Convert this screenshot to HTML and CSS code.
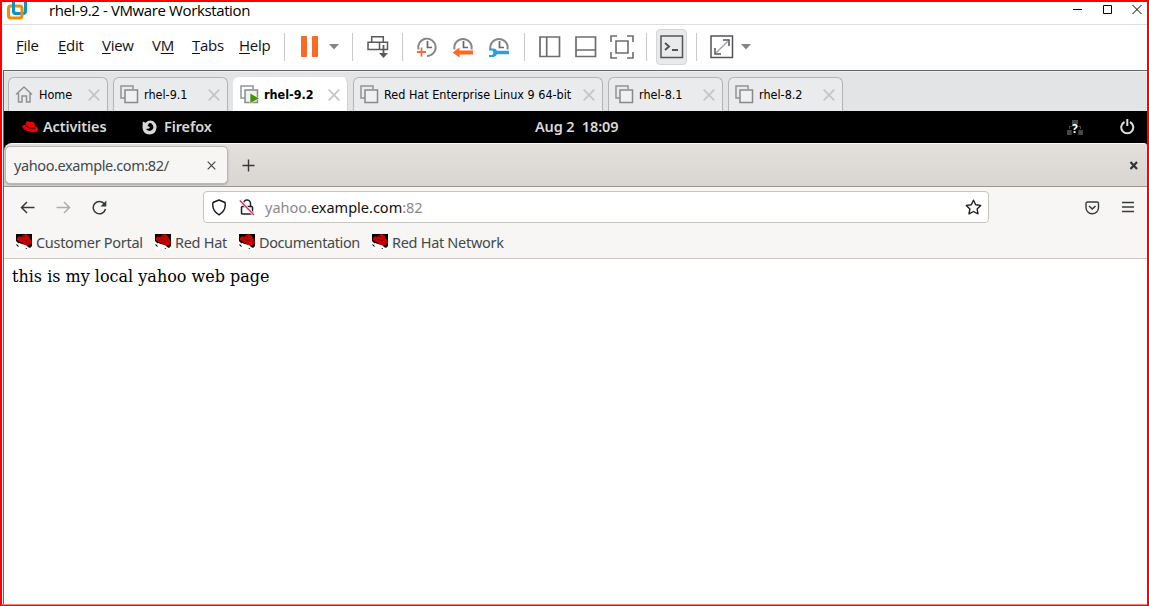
FILE: index.html
```html
<!DOCTYPE html>
<html lang="en">
<head>
<meta charset="utf-8">
<title>rhel-9.2 - VMware Workstation</title>
<link rel="stylesheet" href="styles.css">
</head>
<body>
<svg class="defs" width="0" height="0">
  <symbol id="vm" viewBox="0 0 19 19"><path d="M5 13H1V1h12v3" fill="none" stroke="#929497" stroke-width="1.5"/><rect x="5" y="5" width="12.5" height="12.5" fill="#f0f1f3" stroke="#88898c" stroke-width="1.5"/></symbol>
  <symbol id="close" viewBox="0 0 12 12"><path d="M.7.7l10.600 10.600M11.300.7L.7 11.300" fill="none" stroke="#c4c5c7" stroke-width="1.700"/></symbol>
  <symbol id="hat" viewBox="0 0 16 16"><path fill="#fff" d="M0 0h16v16H0z"/><path d="M0 0h16v12l-2 2-2-1-4-1-4-2-2-1-2-2z"/><path d="M1 4l2-2 2 1 2-2 3-1 3 2 1 3 1 1 1 3-3 2H9L4 8 1 6z" fill="#c80000"/><path d="M6 2l3 1M5 5l6 2" stroke="#7b0000"/><path d="M3 9l3 1 3 1 3 1-2 2-2-1-3-1-2-1z" fill="#fff"/><path d="M0 10l2 1 1 2-2-1zM6 12l2 1M9 14h2v1" fill="#000"/></symbol>
</svg>
<div class="window">
  <header class="titlebar">
    <svg class="logo" width="21" height="18" viewBox="0 0 21 18"><g fill="none" stroke-width="3"><rect x="6.500" y="-2.500" width="12" height="14" rx="2.500" stroke="#0793d0"/><path d="M15 6.500v7a2.500 2.500 0 0 1-2.500 2.500H4a2.500 2.500 0 0 1-2.500-2.500V6.500A2.500 2.500 0 0 1 4 4h8.500A2.500 2.500 0 0 1 15 6.500z" stroke="#f38b00"/><path d="M6.500 2v7a2.500 2.500 0 0 0 2.500 2.500h4" stroke="#0793d0"/></g></svg>
    <span class="title">rhel-9.2 - VMware Workstation</span>
    <svg class="controls" width="68" height="12" viewBox="0 0 68 12" fill="none" stroke="#000"><path d="M0 6.500h9M59.500 2l9 9M68.500 2l-9 9"/><path d="M30.500 2.500h8v8h-8z"/></svg>
  </header>
  <nav class="menubar">
    <span class="m-file"><u>F</u>ile</span><span class="m-edit"><u>E</u>dit</span><span class="m-view"><u>V</u>iew</span><span class="m-vm">V<u>M</u></span><span class="m-tabs"><u>T</u>abs</span><span class="m-help"><u>H</u>elp</span>
    <div class="tools group-power">
      <svg width="18" height="22"><path d="M.5.5h5v20h-5zM11.500.5h5v20h-5z" fill="#ff6a1f" stroke="#ed6c2f"/></svg>
      <svg class="drop" width="10" height="6"><path d="M0 0h10L5 5.500z" fill="#858585"/></svg>
    </div>
    <div class="tools group-keys"><svg width="22" height="24" viewBox="0 0 22 24" fill="none" stroke="#58595b" stroke-width="1.500"><path d="M4.700 1.700h11.600v5.600H4.700zM1 7.300h19.500V14.500H1zM12.500 7.300v7.200"/><path d="M16.500 10v11" stroke-width="1.800"/><path d="M12 18h9l-4.500 5z" fill="#58595b" stroke="none"/></svg></div>
    <div class="tools group-snap">
      <svg width="22" height="23" viewBox="0 0 22 23" fill="none"><path d="M2.500 13.500A8.700 8.700 0 1 1 11 20" stroke="#85868a" stroke-width="1.900"/><path d="M11.500 5v6.500H16" stroke="#66676a" stroke-width="1.700"/><path d="M1 16h9M5.500 11.500v9" stroke="#f36b37" stroke-width="1.800"/></svg>
      <svg width="22" height="23" viewBox="0 0 22 23" fill="none"><path d="M2.500 13.500A8.700 8.700 0 1 1 19.500 13.500" stroke="#85868a" stroke-width="1.900"/><path d="M11.500 5v6.500H16" stroke="#66676a" stroke-width="1.700"/><path d="M.5 16.500l7-5v3H21v4H7.500v3z" fill="#ff6a1f"/></svg>
      <svg width="22" height="23" viewBox="0 0 22 23" fill="none"><path d="M2.500 13.500A8.700 8.700 0 1 1 19.500 13.500" stroke="#85868a" stroke-width="1.900"/><path d="M11.500 5v6.500H16" stroke="#66676a" stroke-width="1.700"/><path d="M1 12.500h4.500q2.500 0 3.500 2.200h12v3.600H9q-1 2.700-3.500 2.700H1v-2h3l1.200-1.200v-2.600L4 14.500H1z" fill="#2c9fdc"/></svg>
    </div>
    <div class="tools group-view">
      <svg width="22" height="22" fill="none" stroke="#6c6d70" stroke-width="1.700"><path d="M1 1h19.500v19.500H1zM7.700 1v19.500"/></svg>
      <svg width="22" height="22" fill="none" stroke="#6c6d70" stroke-width="1.700"><path d="M1 1h19.500v19.500H1zM1 14h19.500"/></svg>
      <svg width="24" height="24" fill="none" stroke="#6c6d70" stroke-width="1.600"><path d="M1 7V1h6M17 1h6v6M23 17v6h-6M7 23H1v-6M6 6h12v12H6z"/></svg>
    </div>
    <div class="tools group-console"><span class="console"><svg width="24" height="24" fill="none" stroke="#535458" stroke-width="1.500"><path d="M1 1h21.500v21.500H1z"/><path d="M5 8l4 3.500L5 15M12 15h6" stroke-width="2"/></svg></span></div>
    <div class="tools group-fit"><svg width="24" height="24" fill="none" stroke="#535458" stroke-width="1.500"><path d="M1 1h21.500v21.500H1z"/><path d="M13 5h6v6M5 13v6h6" stroke-width="1.500"/><path d="M6 18L18 6" stroke="#a2a3a5" stroke-width="1.500"/></svg><svg class="drop" width="10" height="6"><path d="M0 0h10L5 5.500z" fill="#858585"/></svg></div>
  </nav>
  <main class="workspace">
    <div class="vmtabs">
      <div class="vmtab home"><svg class="vmicon" width="19" height="19" viewBox="0 0 19 19" fill="none" stroke="#909194" stroke-width="1.500"><path d="M1 9.500L9 2l8 7.500M3.500 8v9H7v-6h4.500v6h3.500V8"/></svg><span>Home</span><svg class="x"><use href="#close"/></svg></div>
      <div class="vmtab"><svg class="vmicon"><use href="#vm"/></svg><span>rhel-9.1</span><svg class="x"><use href="#close"/></svg></div>
      <div class="vmtab active"><svg class="vmicon" viewBox="0 0 19 19"><use href="#vm"/><path d="M10 8l9.500 5.500L10 18.500z" fill="#409407" stroke="#fff" stroke-width=".6"/></svg><span>rhel-9.2</span><svg class="x"><use href="#close"/></svg></div>
      <div class="vmtab wide"><svg class="vmicon"><use href="#vm"/></svg><span>Red Hat Enterprise Linux 9 64-bit</span><svg class="x"><use href="#close"/></svg></div>
      <div class="vmtab"><svg class="vmicon"><use href="#vm"/></svg><span>rhel-8.1</span><svg class="x"><use href="#close"/></svg></div>
      <div class="vmtab"><svg class="vmicon"><use href="#vm"/></svg><span>rhel-8.2</span><svg class="x"><use href="#close"/></svg></div>
    </div>
    <div class="gnome">
      <svg class="redhat" width="16" height="12" viewBox="0 0 16 12"><path d="M4 1q2-1.500 4 0 5-1 5 4 3 1 3 3 0 4-7 3Q1 9 .2 5.500 0 4 3.500 4z" fill="#e00"/><path d="M3.500 4.300q3 3.700 9.500 2.700" stroke="#320000" fill="none"/></svg>
      <span class="activities">Activities</span>
      <svg class="fox" width="15" height="15" viewBox="0 0 15 15"><path d="M.8 1.500L3.500 2.700Q7-.8 11 1q4 3 3.500 7-1 6.500-7 6.500T.5 8z" fill="#d8d8d8"/><path d="M7 3.200q2-.7 3 .8 2.500 3 .5 5.500-3 3-6.500-.5l3-.5 1-1.500-2.500-1z" fill="#000"/></svg>
      <span class="appname">Firefox</span>
      <span class="clock">Aug 2&nbsp; 18:09</span>
      <span class="net"><svg width="17" height="15" viewBox="0 0 17 15"><path d="M5 0h6v4H5zM0 10h5v5H0zM11 10h5v5h-5zM2 6h12v3h-1V7H3v2H2z" fill="#484848"/><path d="M4.500 4h7v11h-7z" fill="#000" opacity=".6"/></svg><span class="question">?</span></span>
      <svg class="power" width="15" height="16" viewBox="0 0 15 16" fill="none" stroke="#ddd" stroke-width="2"><path d="M4.500 3a6 6 0 1 0 5.500 0M7.300 0v7"/></svg>
    </div>
    <div class="browser">
      <div class="tabstrip">
        <div class="pagetab"><span>yahoo.example.com:82/</span><svg width="9" height="9" viewBox="0 0 9 9"><path d="M.7.7l7.600 7.600M8.300.7L.7 8.300" stroke="#41474a" stroke-width="1.200"/></svg></div>
        <svg class="plus" width="13" height="13"><path d="M6.500.5v12M.5 6.500h12" stroke="#33393b" stroke-width="1.400"/></svg>
        <svg class="winclose" width="10" height="9"><path d="M1.500 1l6.500 7M8 1L1.500 8" stroke="#2e3436" stroke-width="2.200"/></svg>
      </div>
      <div class="navbar">
        <svg class="back" width="15" height="13" fill="none" stroke="#353b3d" stroke-width="1.500"><path d="M14.500 6.500H1.500M7 1L1.500 6.500 7 12"/></svg>
        <svg class="forward" width="15" height="13" fill="none" stroke="#abaeae" stroke-width="1.500"><path d="M.5 6.500h13M8 1l5.500 5.500L8 12"/></svg>
        <svg class="reload" width="15" height="15" fill="none" stroke="#353b3d" stroke-width="1.500"><path d="M12.500 4A6.200 6.200 0 1 0 13.500 9"/><path d="M14.300.5v6H8.500z" fill="#353b3d" stroke="none"/></svg>
        <div class="urlbar">
          <svg class="shield" width="16" height="17" viewBox="0 0 16 17"><path d="M8 1l6 2.500q1.500 8-6 12.300Q.5 11.500 2 3.500z" fill="none" stroke="#15141a" stroke-width="1.400" stroke-linejoin="round"/></svg>
          <svg class="lock" width="16" height="17" viewBox="0 0 16 17" fill="none"><path d="M4.500 7V4.500a3.500 3.500 0 0 1 7 0V7M3.500 7.500h9q1 0 1 1v5.500q0 1-1 1h-9q-1 0-1-1V8.500q0-1 1-1z" stroke="#202024" stroke-width="1.500"/><path d="M1 1.500l14 14.500" stroke="#fff" stroke-width="3"/><path d="M.8 1.500L15 16" stroke="#e22850" stroke-width="1.400"/></svg>
          <span class="url">yahoo.<b>example.com</b>:82</span>
          <svg class="star" width="17" height="17" viewBox="0 0 17 17"><path d="M8.500 1.200l2.200 4.500 5 .7-3.600 3.500.9 5-4.500-2.400-4.500 2.400.9-5-3.600-3.500 5-.7z" fill="none" stroke="#202024" stroke-width="1.400" stroke-linejoin="round"/></svg>
        </div>
        <svg class="pocket" width="15" height="14" fill="none" stroke="#353b3d" stroke-width="1.400"><path d="M2.500 1h9.500q1.500 0 1.500 1.500v4a6.200 6.200 0 0 1-12.500 0v-4Q1 1 2.500 1z"/><path d="M4 5l3.300 3L10.500 5" stroke-width="1.600"/></svg>
        <svg class="burger" width="12" height="12"><path d="M0 1.500h12M0 6h12M0 10.500h12" stroke="#353b3d" stroke-width="1.300"/></svg>
      </div>
      <div class="bookmarks">
        <span class="bookmark b1"><svg width="16" height="16"><use href="#hat"/></svg><span>Customer Portal</span></span>
        <span class="bookmark b2"><svg width="16" height="16"><use href="#hat"/></svg><span>Red Hat</span></span>
        <span class="bookmark b3"><svg width="16" height="16"><use href="#hat"/></svg><span>Documentation</span></span>
        <span class="bookmark b4"><svg width="16" height="16"><use href="#hat"/></svg><span>Red Hat Network</span></span>
      </div>
      <div class="page">this is my local yahoo web page</div>
    </div>
  </main>
</div>
</body>
</html>
```
FILE: styles.css
```css
* { box-sizing: border-box; }
body { margin: 0; overflow: hidden; background: #fff; }
svg { display: block; flex: none; }
.defs { position: absolute; }
.window { width: 1149px; height: 606px; border: 2px solid #f00; border-bottom-width: 1px; box-shadow: inset 0 -1px #ff7d7d; display: flex; flex-direction: column; padding: 0 0 1px 1px; }
.titlebar { height: 23px; flex: none; display: flex; align-items: flex-start; border-bottom: 1px solid #dedede; font: 15px/16px "Open Sans", sans-serif; color: #000; }
.logo { margin-left: 4px; }
.title { margin-left: 21px; white-space: nowrap; letter-spacing: -.38px; }
.controls { margin: 1px 6px 0 auto; overflow: visible; }
.menubar { height: 45px; flex: none; display: flex; padding-left: 13px; font: 15px/40px "Open Sans", sans-serif; letter-spacing: -.3px; color: #111; }
.menubar > span { white-space: nowrap; }
.menubar u { text-underline-offset: 2px; text-decoration-thickness: 1px; text-decoration-skip-ink: none; }
.m-file { width: 42px; }
.m-edit { width: 44px; }
.m-view { width: 50px; }
.m-vm { width: 40px; }
.m-tabs { width: 47px; }
.m-help { width: 45px; }
.tools { height: 28px; margin-top: 8px; display: flex; align-items: center; border-left: 1px solid #c9c9c9; flex: none; }
.group-power { width: 68px; padding-left: 16px; gap: 10px; }
.group-keys { width: 50px; padding-left: 14px; }
.group-snap { width: 122px; padding-left: 13px; gap: 14px; }
.group-view { width: 122px; padding-left: 14px; gap: 14px; }
.group-view svg:last-child { margin-left: -1px; }
.group-console { width: 50px; padding-left: 9px; }
.group-fit { padding-left: 13px; gap: 7px; }
.console { width: 31px; height: 36px; display: flex; align-items: center; justify-content: center; background: #e9eaec; border: 1px solid #d5d6d8; border-radius: 4px; flex: none; }
.workspace { flex: 1; border-top: 1px solid #646466; border-left: 1px solid #646466; display: flex; flex-direction: column; }
.vmtabs { height: 40px; background: #e3e4e6; padding: 6px 0 0 4px; display: flex; gap: 5px; box-shadow: inset 0 1px #f0f0f0; flex: none; }
.vmtab { width: 115px; height: 34px; border: 1px solid #b3b4b6; border-bottom: 0; border-radius: 6px 6px 0 0; background: #eaebed; display: flex; align-items: center; padding: 0 7px 0 6px; font: 12.500px/32px "DejaVu Sans Condensed", "Noto Sans", sans-serif; color: #000; white-space: nowrap; }
.vmtab.home { width: 100px; }
.vmtab.wide { width: 250px; }
.vmtab.active { background: #fff; border-color: #fff #d0d0d0 #fff #fff; font-weight: 700; }
.vmtab span { margin-left: 5px; }
.vmicon { width: 19px; height: 19px; }
.x { width: 12px; height: 12px; margin-left: auto; }
.gnome { height: 32px; background: #000; flex: none; display: flex; align-items: center; color: #d9d9d9; font: 600 14.500px/32px "Noto Sans", sans-serif; letter-spacing: -.12px; white-space: nowrap; }
.activities, .appname, .clock { margin-top: -2px; }
.redhat { margin-left: 18px; }
.activities { width: 100px; margin-left: 5px; }
.fox { margin-left: -1px; }
.appname { margin-left: 7px; width: 371px; }
.net { position: relative; margin-left: auto; }
.power { margin: 0 12px 0 36px; }
.question { position: absolute; left: 5px; top: 0; font: 700 12px/17px "Noto Sans", sans-serif; color: #fff; }
.browser { flex: 1; display: flex; flex-direction: column; background: #000; font-family: "Noto Sans", sans-serif; color: #43494b; }
.tabstrip { height: 44px; flex: none; border-radius: 8px 3px 0 0; background: linear-gradient(#e3dfdc, #d9d5d1); border-top: 1px solid #faf8f6; border-bottom: 1px solid #999691; padding: 2px 8px 0 1px; display: flex; }
.pagetab { width: 223px; height: 38px; background: #f7f6f5; border: 1px solid #bbb7b3; border-radius: 5px; box-shadow: 0 1px 2px #aaa; display: flex; align-items: center; justify-content: space-between; padding: 0 11px 0 8px; font-size: 14.500px; letter-spacing: -.4px; }
.plus { margin: 13px 0 0 14px; }
.winclose { margin: 15px 0 0 auto; }
.navbar { height: 41px; flex: none; background: #f7f6f5; display: flex; align-items: center; padding: 0 13px 0 16px; }
.forward { margin-left: 21px; }
.reload { margin-left: 21px; }
.urlbar { margin-left: 96px; width: 786px; height: 32px; margin-top: -1px; border: 1px solid #c8c5c0; border-radius: 4px; background: #fff; display: flex; align-items: center; padding: 0 6px 0 7px; }
.lock { margin-left: 12px; }
.url { margin-left: 10px; font-size: 14.500px; color: #88898b; }
.url b { font-weight: 400; color: #111; }
.star { margin-left: auto; }
.pocket { margin-left: auto; }
.burger { margin: -2px 0 0 22px; }
.bookmarks { height: 31px; flex: none; background: #f7f6f5; border-bottom: 1px solid #cfc9c2; display: flex; padding-left: 12px; }
.bookmark { display: flex; align-items: center; gap: 4px; height: 28px; font-size: 14.500px; letter-spacing: -.3px; white-space: nowrap; }
.b1 { width: 139px; }
.b2 { width: 84px; }
.b3 { width: 133px; }
.b3 > span { letter-spacing: -.4px; }
.page { flex: 1; background: #fff; padding: 8px; font: 16px/19px "DejaVu Serif", serif; color: #000; }
```
